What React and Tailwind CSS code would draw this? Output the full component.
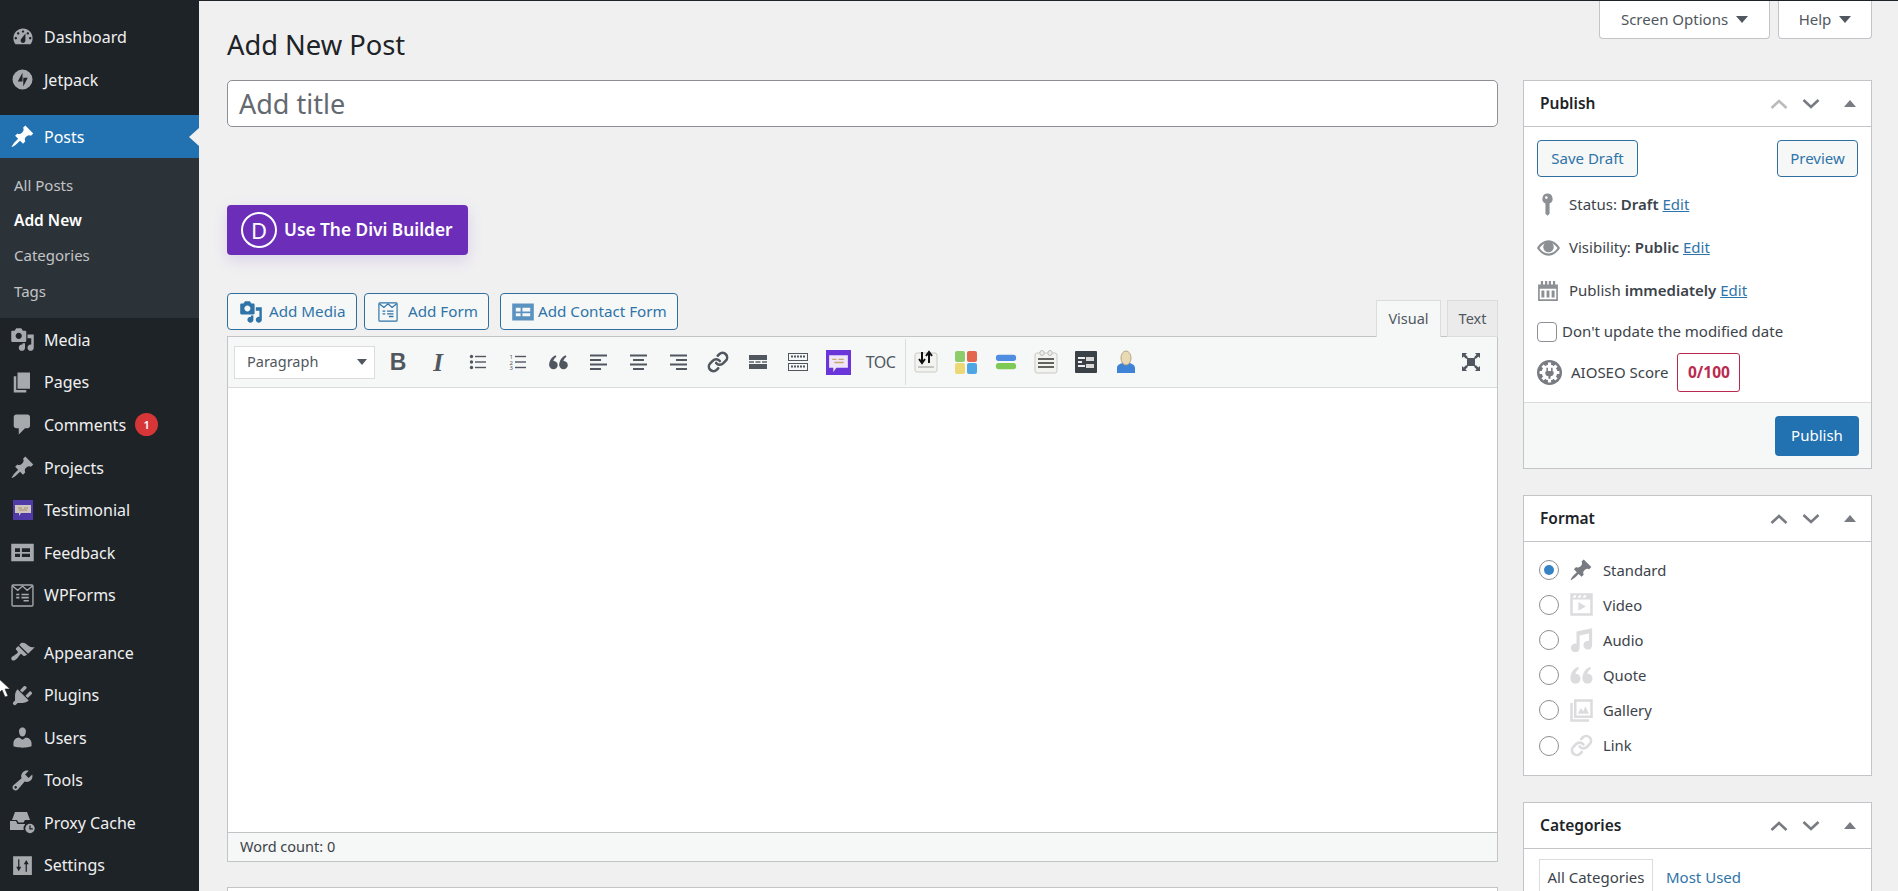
import React from "react";
import { Link as LinkIcon } from "lucide-react";

const paths = {
  dashboard: "M3.76 16h12.48c1.1-1.37 1.76-3.11 1.76-5 0-4.42-3.58-8-8-8s-8 3.58-8 8c0 1.89.66 3.63 1.76 5zM10 4.5c.55 0 1 .45 1 1s-.45 1-1 1-1-.45-1-1 .45-1 1-1zM6 6c.55 0 1 .45 1 1s-.45 1-1 1-1-.45-1-1 .45-1 1-1zm8 0c.55 0 1 .45 1 1s-.45 1-1 1-1-.45-1-1 .45-1 1-1zm-5.37 5.55L12 7v6c0 1.1-.9 2-2 2s-2-.9-2-2c0-.57.24-1.08.63-1.45zM4 10c.55 0 1 .45 1 1s-.45 1-1 1-1-.45-1-1 .45-1 1-1zm12 0c.55 0 1 .45 1 1s-.45 1-1 1-1-.45-1-1 .45-1 1-1z",
  jetpack: "M10 2a8 8 0 1 0 0 16 8 8 0 0 0 0-16zM10 4.5v7H6.2zM10.6 15.5v-7h3.6z",
  post: "M10.44 3.02l1.82-1.82 6.36 6.35-1.83 1.82c-1.05-.68-2.48-.57-3.41.36l-.75.75c-.92.93-1.04 2.35-.35 3.41l-1.83 1.82-2.41-2.41-2.8 2.79c-.42.42-3.38 2.71-3.8 2.29s1.86-3.39 2.28-3.81l2.79-2.79L4.1 9.36l1.83-1.82c1.05.69 2.48.57 3.4-.36l.75-.75c.93-.92 1.05-2.35.36-3.41z",
  media: "M13 11V4c0-.55-.45-1-1-1h-1.67L9 1H5L3.67 3H2c-.55 0-1 .45-1 1v7c0 .55.45 1 1 1h10c.55 0 1-.45 1-1zM7 4.5c1.38 0 2.5 1.12 2.5 2.5S8.38 9.5 7 9.5 4.5 8.38 4.5 7 5.62 4.5 7 4.5zM14 6h5v10.5c0 1.38-1.12 2.5-2.5 2.5S14 17.88 14 16.5s1.12-2.5 2.5-2.5c.17 0 .34.02.5.05V9h-3V6zm-4 8.05V13h2v3.5c0 1.38-1.12 2.5-2.5 2.5S7 17.88 7 16.5 8.12 14 9.5 14c.17 0 .34.02.5.05z",
  page: "M6 15V2h10v13H6zm-1 1h8v2H3V5h2v11z",
  comment: "M5 2h9c1.1 0 2 .9 2 2v7c0 1.1-.9 2-2 2h-2l-5 5v-5H5c-1.1 0-2-.9-2-2V4c0-1.1.9-2 2-2z",
  feedback: "M1 3h18v14H1zM4 6.500v3h4v-3zM9.500 6.500v3H16v-3zM4 11v2.500h4V11zM9.500 11v2.500H16V11z",
  appearance: "M14.48 11.06L7.41 3.99l1.5-1.5c.5-.56 2.3-.47 3.51.32 1.21.8 1.43 1.28 2.91 2.1 1.18.64 2.45 1.26 4.45.85zm-.71.71L6.7 4.7 4.93 6.47c-.39.39-.39 1.02 0 1.41l1.06 1.06c.39.39.39 1.03 0 1.42-.6.6-1.43 1.11-2.21 1.69-.35.26-.7.53-1.01.84C1.43 13.23.4 14.85 1.53 15.98c1.13 1.13 2.75.1 4.08-1.24.31-.31.58-.66.85-1.01.58-.78 1.09-1.61 1.69-2.21.39-.39 1.02-.39 1.41 0l1.06 1.06c.39.39 1.02.39 1.41 0z",
  plugins: "M13.11 4.36L9.87 7.6 8 5.73l3.24-3.24c.35-.34 1.05-.2 1.56.32.52.51.66 1.21.31 1.55zm-8 1.77l.91-1.12 9.01 9.01-1.19.84c-.71.71-2.63 1.16-3.82 1.16H6.14L4.9 17.26c-.59.59-1.54.59-2.12 0-.59-.58-.59-1.53 0-2.12l1.24-1.24v-3.88c0-1.13.4-3.19 1.09-3.89zm7.26 3.97l3.24-3.24c.34-.35 1.04-.21 1.55.31.52.51.66 1.21.31 1.55l-3.24 3.25z",
  users: "M10 9.25c-2.27 0-2.73-3.44-2.73-3.44C7 4.02 7.82 2 9.97 2c2.16 0 2.98 2.02 2.71 3.81 0 0-.41 3.44-2.68 3.44zm0 2.57L12.72 10c2.39 0 4.52 2.33 4.52 4.53v2.49s-3.65 1.13-7.24 1.13c-3.65 0-7.24-1.13-7.24-1.13v-2.49c0-2.25 1.94-4.48 4.47-4.48z",
  tools: "M16.68 9.77c-1.34 1.34-3.3 1.67-4.95.99l-5.41 6.52c-.99.99-2.59.99-3.58 0s-.99-2.59 0-3.57l6.52-5.42c-.68-1.65-.35-3.61.99-4.95 1.28-1.28 3.12-1.62 4.72-1.06l-2.89 2.89 2.82 2.82 2.86-2.87c.53 1.58.18 3.39-1.08 4.65zM3.81 16.21c.4.39 1.04.39 1.43 0 .4-.4.4-1.04 0-1.43-.39-.4-1.03-.4-1.43 0-.39.39-.39 1.03 0 1.43z",
  settings: "M2.5 2.5h15v15h-15zM6.5 5v6H5l2 3.5L9 11H7.500V5zM12.500 15V9H11l2-3.5L15 9h-1.500v6z",
  pin: "M10 .5a4.500 4.500 0 0 1 1.800 8.600V18L10 19.800 8.200 18V9.100A4.500 4.500 0 0 1 10 .5zM9 2.800a1.200 1.200 0 1 0 0 2.400 1.200 1.200 0 0 0 0-2.400z",
  calendar: "M1 4h2.500V1h2v3h1.800V1h2v3h1.400V1h2v3h1.800V1h2v3H19v15H1zM2.500 8v9.500h15V8zM4 9.500h2.700V16H4zM8.700 9.500h2.600V16H8.700zM13.300 9.500H16V16h-2.700z",
  video: "M1 1h18v18H1zM3 6v11h14V6zM7.500 8l6 3.500-6 3.500zM4 2.500L3 4.500h2l1-2zM8 2.500L7 4.500h2l1-2zM12 2.500L11 4.500h2l1-2z",
  audio: "M6 3.500L18.500 1v13.500a3.500 3.500 0 1 1-2.500-3.300V5.200L8.500 6.700v10a3.500 3.500 0 1 1-2.500-3.300z",
  gallery: "M1 4h2v13h13v2H1zM4 1h15v15H4zM6 3v11h11V3zM7 12.500l2.500-4.500 2 2.500L13 6.500l3 6z",
};

function Dash({ name, className }) {
  return (
    <svg viewBox="0 0 20 20" className={className} fill="currentColor" fillRule="evenodd">
      <path d={paths[name]} />
    </svg>
  );
}

function QuoteMark({ className }) {
  return (
    <svg viewBox="0 0 20 20" className={className} fill="currentColor">
      <circle cx="5.200" cy="12.500" r="4" />
      <path d="M1.200 12.500c0-4.500 2-7.500 6-9.500l.8 1.500C5.800 6 4.800 8 5 10z" />
      <circle cx="14.800" cy="12.500" r="4" />
      <path d="M10.800 12.500c0-4.500 2-7.500 6-9.500l.8 1.500C15.400 6 14.400 8 14.600 10z" />
    </svg>
  );
}

function Testimonial({ className }) {
  return (
    <svg viewBox="0 0 20 20" className={className}>
      <rect width="20" height="20" fill="#4f3aa8" />
      <path d="M2 5h16v8H8l-2 3v-3H2z" fill="#cfc7bd" />
      <path d="M5 8h4M11 8h4M6 10h8" stroke="#a88f6a" strokeWidth="1" />
    </svg>
  );
}

function ProxyCache({ className }) {
  return (
    <svg viewBox="0 0 25 22" className={className} fill="currentColor">
      <path d="M5 0h12l3 8h-5l-1.500 2.500h-5L7 8H2z" />
      <path d="M0 9h6l1.500 3h7.700a6.500 6.500 0 0 0-1.500 6H0z" />
      <circle cx="20" cy="16.500" r="4.700" />
      <path d="M20 13.500v3.300h2.800" stroke="#1d2327" strokeWidth="1.300" fill="none" />
    </svg>
  );
}

function WpForm({ className, color = "currentColor" }) {
  return (
    <svg viewBox="0 0 22 22" className={className} fill="none" stroke={color} strokeWidth="1.300">
      <rect x="1" y="1" width="20" height="20" rx="1" />
      <path d="M1.500 2l5 4 4.500-4 4.500 4 5-4" />
      <path d="M5 10h3M10 10h7M5 13h3M10 13h7M12 16h5" strokeWidth="1.500" />
    </svg>
  );
}

const topItems = [
  { label: "Dashboard", icon: <Dash name="dashboard" className="w-[24px] h-[24px]" /> },
  { label: "Jetpack", icon: <Dash name="jetpack" className="w-[25px] h-[25px]" /> },
];
const midItems = [
  { label: "Media", icon: <Dash name="media" className="w-[25px] h-[25px]" /> },
  { label: "Pages", icon: <Dash name="page" className="w-[25px] h-[25px]" /> },
  { label: "Comments", badge: "1", icon: <Dash name="comment" className="w-[25px] h-[25px]" /> },
  { label: "Projects", icon: <Dash name="post" className="w-[25px] h-[25px]" /> },
  { label: "Testimonial", icon: <Testimonial className="w-[20px] h-[20px]" /> },
  { label: "Feedback", icon: <Dash name="feedback" className="w-[25px] h-[25px]" /> },
  { label: "WPForms", icon: <WpForm className="w-[23px] h-[23px]" /> },
];
const lowItems = [
  { label: "Appearance", icon: <Dash name="appearance" className="w-[25px] h-[25px]" /> },
  { label: "Plugins", icon: <Dash name="plugins" className="w-[25px] h-[25px]" /> },
  { label: "Users", icon: <Dash name="users" className="w-[25px] h-[25px]" /> },
  { label: "Tools", icon: <Dash name="tools" className="w-[25px] h-[25px]" /> },
  { label: "Proxy Cache", icon: <ProxyCache className="w-[25px] h-[22px]" /> },
  { label: "Settings", icon: <Dash name="settings" className="w-[25px] h-[25px]" /> },
];

function MenuItem({ item }) {
  return (
    <div className="flex items-center h-[42.55px] text-[#f0f0f1] text-[16px]">
      <div className="w-[44px] flex justify-center pl-[1px] text-[#a7aaad]">{item.icon}</div>
      <span>{item.label}</span>
      {item.badge && (
        <span className="ml-[9px] w-[23px] h-[23px] rounded-full bg-[#d63638] text-white text-[11px] font-semibold flex items-center justify-center">
          {item.badge}
        </span>
      )}
    </div>
  );
}

function Sidebar() {
  return (
    <div className="w-[199px] shrink-0 bg-[#1d2327] pt-[15px]">
      {topItems.map((i) => <MenuItem key={i.label} item={i} />)}
      <div className="relative flex items-center h-[43px] mt-[14px] bg-[#2271b1] text-white text-[16px]">
        <div className="w-[44px] flex justify-center pl-[1px]"><Dash name="post" className="w-[25px] h-[25px]" /></div>
        <span>Posts</span>
        <div className="absolute right-0 top-[13px] w-0 h-0 border-y-[9px] border-y-transparent border-r-[10px] border-r-[#f0f0f1]" />
      </div>
      <div className="bg-[#2c3338] h-[160px] pt-[9px] pl-[14px] text-[15px] text-[#c3c4c7] flex flex-col">
        <div className="h-[35.4px] flex items-center">All Posts</div>
        <div className="h-[35.4px] flex items-center font-semibold text-white text-[15.5px]">Add New</div>
        <div className="h-[35.4px] flex items-center">Categories</div>
        <div className="h-[35.4px] flex items-center">Tags</div>
      </div>
      <div className="h-[0.5px]" />
      {midItems.map((i) => <MenuItem key={i.label} item={i} />)}
      <div className="h-[15px]" />
      {lowItems.map((i) => <MenuItem key={i.label} item={i} />)}
    </div>
  );
}

function Tool({ children }) {
  return <div className="w-[40px] h-[32px] flex items-center justify-center text-[#50575e]">{children}</div>;
}

function Lines({ kind }) {
  const rows = {
    left: [[0, 17], [0, 11], [0, 17], [0, 11]],
    center: [[0, 17], [3, 11], [0, 17], [3, 11]],
    right: [[0, 17], [6, 11], [0, 17], [6, 11]],
  }[kind];
  return (
    <svg viewBox="0 0 19 18" className="w-[19px] h-[18px]" fill="currentColor">
      {rows.map((r, i) => <rect key={i} x={r[0] + 1} y={1.500 + i * 4.500} width={r[1]} height="2" />)}
    </svg>
  );
}

function Toolbar() {
  return (
    <div className="h-[51px] bg-[#f6f7f7] border-b border-[#dcdcde] flex items-center pl-[6px] pr-[7px]">
      <div className="w-[141px] h-[33px] bg-white border border-[#dcdcde] flex items-center justify-between pl-[12px] pr-[7px] text-[14.5px] text-[#50575e]">
        <span>Paragraph</span>
        <span className="w-0 h-0 border-x-[5px] border-x-transparent border-t-[6px] border-t-[#50575e]" />
      </div>
      <div className="flex items-center ml-[3px]">
        <Tool><span className="font-['Liberation_Sans',sans-serif] font-bold text-[23px] leading-none">B</span></Tool>
        <Tool><span className="font-['Liberation_Serif',serif] font-bold italic text-[25px] leading-none">I</span></Tool>
        <Tool>
          <svg viewBox="0 0 18 18" className="w-[18px] h-[18px]" fill="currentColor">
            <circle cx="2.500" cy="3.500" r="1.700" /><circle cx="2.500" cy="9" r="1.700" /><circle cx="2.500" cy="14.500" r="1.700" />
            <rect x="6" y="2.800" width="11" height="1.400" /><rect x="6" y="8.300" width="11" height="1.400" /><rect x="6" y="13.800" width="11" height="1.400" />
          </svg>
        </Tool>
        <Tool>
          <svg viewBox="0 0 18 18" className="w-[18px] h-[18px]" fill="currentColor">
            <text x="0.500" y="6" fontSize="6">1</text><text x="0.500" y="11.500" fontSize="6">2</text><text x="0.500" y="17" fontSize="6">3</text>
            <rect x="6" y="2.800" width="11" height="1.400" /><rect x="6" y="8.300" width="11" height="1.400" /><rect x="6" y="13.800" width="11" height="1.400" />
          </svg>
        </Tool>
        <Tool><QuoteMark className="w-[21px] h-[21px]" /></Tool>
        <Tool><Lines kind="left" /></Tool>
        <Tool><Lines kind="center" /></Tool>
        <Tool><Lines kind="right" /></Tool>
        <Tool><LinkIcon className="w-[22px] h-[22px]" strokeWidth={2.800} /></Tool>
        <Tool>
          <svg viewBox="0 0 18 18" className="w-[18px] h-[18px]" fill="currentColor">
            <rect y="2" width="18" height="5" /><rect y="8.300" width="5" height="1.400" /><rect x="6.500" y="8.300" width="5" height="1.400" /><rect x="13" y="8.300" width="5" height="1.400" /><rect y="11" width="18" height="5" />
          </svg>
        </Tool>
        <Tool>
          <svg viewBox="0 0 20 20" className="w-[20px] h-[20px]" fill="none" stroke="currentColor">
            <rect x="0.500" y="1.500" width="19" height="7" /><rect x="0.500" y="11.500" width="19" height="7" />
            <path d="M3 4.500h14M3 14.500h14" strokeWidth="2" strokeDasharray="2 1" />
          </svg>
        </Tool>
        <Tool>
          <svg viewBox="0 0 24 24" className="w-[25px] h-[25px]">
            <rect width="24" height="24" fill="#6a35d9" />
            <path d="M3 5h18v12H10l-3 4v-4H3z" fill="#efe6fa" />
            <path d="M6 9h4M12 9h5M8 12h9" stroke="#c9a86a" strokeWidth="1.300" />
          </svg>
        </Tool>
        <div className="w-[45px] text-center text-[16px] text-[#50575e] tracking-[-0.5px]">TOC</div>
      </div>
      <div className="w-[1px] h-[46px] bg-[#dcdcde] ml-[2px]" />
      <div className="flex items-center">
        <Tool>
          <svg viewBox="0 0 24 24" className="w-[24px] h-[24px]">
            <rect x="1" y="3" width="22" height="19" rx="2" fill="#f3f3f0" stroke="#c9c9c4" />
            <path d="M8 2v10M5 9l3 4 3-4M15 13V3M12 6l3-4 3 4" stroke="#111" strokeWidth="2" fill="none" />
            <path d="M4 17h16" stroke="#b5b5b0" strokeWidth="1.500" />
          </svg>
        </Tool>
        <Tool>
          <svg viewBox="0 0 24 24" className="w-[24px] h-[24px]">
            <rect x="1" y="1" width="10" height="11" rx="2" fill="#8ecb6b" /><rect x="13" y="1" width="10" height="11" rx="2" fill="#e3674f" />
            <rect x="1" y="13" width="10" height="11" rx="2" fill="#ecd874" /><rect x="13" y="13" width="10" height="11" rx="2" fill="#4fa6e4" />
          </svg>
        </Tool>
        <Tool>
          <svg viewBox="0 0 24 24" className="w-[22px] h-[22px]">
            <rect x="1" y="4" width="22" height="7" rx="3" fill="#4f8de0" /><rect x="1" y="13" width="22" height="7" rx="3" fill="#7fc957" />
          </svg>
        </Tool>
        <Tool>
          <svg viewBox="0 0 24 24" className="w-[24px] h-[24px]">
            <rect x="1" y="3" width="22" height="20" rx="2" fill="#f2f2ee" stroke="#c9c9c4" />
            <rect x="6" y="0.500" width="4" height="5" rx="2" fill="#eee" stroke="#bbb" /><rect x="14" y="0.500" width="4" height="5" rx="2" fill="#eee" stroke="#bbb" />
            <path d="M4 9h16M4 13h16M4 17h16" stroke="#333" strokeWidth="1.700" />
          </svg>
        </Tool>
        <Tool>
          <svg viewBox="0 0 24 24" className="w-[24px] h-[24px]">
            <rect x="1" y="1" width="22" height="22" rx="1" fill="#3a4147" />
            <rect x="4" y="7" width="7" height="2" fill="#eee" /><rect x="4" y="11" width="4" height="2" fill="#eee" /><rect x="4" y="15" width="7" height="2" fill="#eee" />
            <rect x="12" y="7" width="8" height="4" fill="#d8d8d8" /><rect x="12" y="14" width="8" height="4" fill="#d8d8d8" />
          </svg>
        </Tool>
        <Tool>
          <svg viewBox="0 0 24 24" className="w-[24px] h-[24px]">
            <path d="M3 23v-5c0-3 3-4 5-5h8c2 1 5 2 5 5v5z" fill="#3f83d6" />
            <ellipse cx="12" cy="8" rx="5" ry="7" fill="#e9d9b5" stroke="#b8a67f" />
          </svg>
        </Tool>
      </div>
      <div className="ml-auto w-[20px] h-[20px] mr-[9px] text-[#50575e]">
        <svg viewBox="0 0 20 20" className="w-[20px] h-[20px]" fill="currentColor">
          <rect x="6" y="6" width="8" height="8" />
          <path d="M1 1h5L4.500 2.700 7 5.200 5.200 7 2.700 4.500 1 6zM19 1v5l-1.700-1.500L14.800 7 13 5.200l2.500-2.500L14 1zM1 19v-5l1.700 1.500L5.200 13 7 14.800l-2.500 2.500L6 19zM19 19h-5l1.500-1.700L13 14.800 14.800 13l2.500 2.500L19 14z" />
        </svg>
      </div>
    </div>
  );
}

function Editor() {
  return (
    <div className="w-[1271px] shrink-0">
      <div className="h-[47px] bg-white border border-[#8c8f94] rounded-[5px] flex items-center pl-[11px] pt-[2px] text-[27px] text-[#646970]">Add title</div>
      <div className="mt-[78px] w-[241px] h-[50px] bg-[#6c2eb9] rounded-[4px] shadow-[0_5px_15px_rgba(108,46,185,0.15)] flex items-center pl-[14px] gap-[7px] text-white font-semibold text-[17.300px]">
        <span className="w-[36px] h-[36px] border-2 border-white rounded-full flex items-center justify-center text-[22px] font-normal">D</span>
        <span>Use The Divi Builder</span>
      </div>
      <div className="mt-[38px] h-[43px] flex justify-between">
        <div className="flex text-[15.200px] text-[#2f74a8]">
          <div className="w-[130px] h-[37px] bg-[#f6f7f7] border border-[#2f6f9e] rounded-[4px] flex items-center pl-[11px] gap-[6px]">
            <Dash name="media" className="w-[24px] h-[24px]" />
            <span>Add Media</span>
          </div>
          <div className="ml-[7px] w-[125px] h-[37px] bg-[#f6f7f7] border border-[#2f6f9e] rounded-[4px] flex items-center pl-[13px] gap-[10px]">
            <WpForm className="w-[20px] h-[20px]" />
            <span>Add Form</span>
          </div>
          <div className="ml-[11px] w-[178px] h-[37px] bg-[#f6f7f7] border border-[#2f6f9e] rounded-[4px] flex items-center pl-[10px] gap-[3px]">
            <Dash name="feedback" className="w-[24px] h-[24px] text-[#5b93c0]" />
            <span>Add Contact Form</span>
          </div>
        </div>
        <div className="flex items-end gap-[6px] text-[14.500px] text-[#50575e] relative z-10 -mb-[1px]">
          <div className="w-[65px] h-[37px] bg-[#f6f7f7] border border-[#dcdcde] border-b-0 flex items-center justify-center">Visual</div>
          <div className="w-[51px] h-[37px] bg-[#ebebeb] border border-[#dcdcde] flex items-center justify-center">Text</div>
        </div>
      </div>
      <div className="h-[526px] border border-[#c3c4c7] bg-white flex flex-col">
        <Toolbar />
        <div className="flex-1" />
        <div className="h-[29px] bg-[#f6f7f7] border-t border-[#c3c4c7] flex items-center pl-[12px] text-[14.500px] text-[#3c434a]">Word count: 0</div>
      </div>
      <div className="mt-[25px] h-[40px] bg-white border border-[#c3c4c7]" />
    </div>
  );
}

function BoxHeader({ title, upDisabled }) {
  return (
    <div className="h-[46px] border-b border-[#c3c4c7] flex items-center pl-[16px] pr-[15px]">
      <span className="font-semibold text-[15.500px] text-[#1d2327] pt-[1px]">{title}</span>
      <svg viewBox="0 0 18 12" className={`ml-auto w-[18px] h-[12px] ${upDisabled ? "text-[#b9bbbd]" : "text-[#787c82]"}`} fill="none" stroke="currentColor" strokeWidth="2.600">
        <path d="M1.500 10L9 3l7.500 7" />
      </svg>
      <svg viewBox="0 0 18 12" className="ml-[14px] w-[18px] h-[12px] text-[#787c82]" fill="none" stroke="currentColor" strokeWidth="2.600">
        <path d="M1.500 2L9 9l7.500-7" />
      </svg>
      <div className="ml-[24px] w-0 h-0 border-x-[6px] border-x-transparent border-b-[7px] border-b-[#787c82]" />
    </div>
  );
}

function MiscRow({ icon, children, h = "h-[43px]" }) {
  return (
    <div className={`${h} flex items-center text-[15px] text-[#3c434a]`}>
      <div className="w-[32px] shrink-0 text-[#8c8f94]">{icon}</div>
      <div>{children}</div>
    </div>
  );
}

function EditLink() {
  return <span className="text-[#2f74a8] underline ml-[4px]">Edit</span>;
}

function EyeIcon() {
  return (
    <svg viewBox="0 0 24 16" className="w-[23px] h-[16px]" fill="currentColor" fillRule="evenodd">
      <path d="M12 0c5.500 0 9.500 4 12 8-2.500 4-6.500 8-12 8S2.500 12 0 8c2.500-4 6.500-8 12-8zM12 2.200C8 2.200 4.800 4.800 2.600 8c2.200 3.200 5.400 5.800 9.400 5.800s7.200-2.600 9.400-5.800C19.200 4.800 16 2.200 12 2.200z" />
      <circle cx="12" cy="7" r="5.500" />
    </svg>
  );
}

const formats = [
  { label: "Standard", checked: true, icon: <Dash name="post" className="w-[24px] h-[24px] text-[#787c82]" /> },
  { label: "Video", icon: <Dash name="video" className="w-[25px] h-[25px] text-[#dcdcde]" /> },
  { label: "Audio", icon: <Dash name="audio" className="w-[25px] h-[25px] text-[#dcdcde]" /> },
  { label: "Quote", icon: <QuoteMark className="w-[25px] h-[25px] text-[#dcdcde]" /> },
  { label: "Gallery", icon: <Dash name="gallery" className="w-[25px] h-[25px] text-[#dcdcde]" /> },
  { label: "Link", icon: <LinkIcon className="w-[23px] h-[23px] text-[#dcdcde]" strokeWidth={2.800} /> },
];

function SideColumn() {
  return (
    <div className="w-[349px] shrink-0">
      <div className="h-[389px] bg-white border border-[#c3c4c7] flex flex-col">
        <BoxHeader title="Publish" upDisabled />
        <div className="flex justify-between px-[13px] pt-[13px] text-[15px] text-[#2f74a8]">
          <div className="w-[101px] h-[37px] bg-[#f6f7f7] border border-[#2f6f9e] rounded-[4px] flex items-center justify-center">Save Draft</div>
          <div className="w-[81px] h-[37px] bg-[#f6f7f7] border border-[#2f6f9e] rounded-[4px] flex items-center justify-center">Preview</div>
        </div>
        <div className="px-[13px] pt-[6px]">
          <MiscRow icon={<Dash name="pin" className="w-[23px] h-[23px] -ml-[1px]" />}>Status: <b className="font-semibold">Draft</b><EditLink /></MiscRow>
          <MiscRow icon={<EyeIcon />}>Visibility: <b className="font-semibold">Public</b><EditLink /></MiscRow>
          <MiscRow icon={<Dash name="calendar" className="w-[22px] h-[22px]" />}>Publish <b className="font-semibold">immediately</b><EditLink /></MiscRow>
          <div className="h-[41px] flex items-center text-[15px] text-[#3c434a] -mt-[1px]">
            <span className="w-[20px] h-[20px] bg-white border border-[#8c8f94] rounded-[4px] mr-[5px]" />
            Don't update the modified date
          </div>
          <div className="h-[39px] flex items-center text-[15px] text-[#3c434a] mt-[1px]">
            <svg viewBox="0 0 24 24" className="w-[25px] h-[25px] mr-[9px]">
              <circle cx="12" cy="12" r="12" fill="#787c82" />
              <circle cx="12" cy="12" r="7.500" fill="#fff" />
              <path d="M12 2.500v19M2.500 12h19M5.300 5.300l13.400 13.400M18.700 5.300L5.300 18.700" stroke="#fff" strokeWidth="3" />
              <path d="M9 7.500h1.500v3h3v-3H15v3.500h1V13c0 1.500-1.500 2.500-3 2.700V18h-2v-2.300C9.500 15.500 8 14.500 8 13v-2h1z" fill="#787c82" />
            </svg>
            <span>AIOSEO Score</span>
            <span className="ml-[9px] w-[63px] h-[39px] border border-[#b92a4e] rounded-[3px] flex items-center justify-center font-bold text-[15.500px] text-[#b92a4e]">0/100</span>
          </div>
        </div>
        <div className="mt-auto h-[66px] bg-[#f6f7f7] border-t border-[#dcdcde] flex items-center justify-end pr-[12px]">
          <div className="w-[84px] h-[40px] bg-[#2271b1] rounded-[4px] text-white text-[15px] flex items-center justify-center">Publish</div>
        </div>
      </div>
      <div className="mt-[26px] h-[281px] bg-white border border-[#c3c4c7]">
        <BoxHeader title="Format" />
        <div className="pl-[15px] pt-[10px]">
          {formats.map((f) => (
            <div key={f.label} className="h-[35.200px] flex items-center text-[14.800px] text-[#3c434a]">
              <span className="w-[20px] h-[20px] rounded-full border border-[#8c8f94] bg-white flex items-center justify-center">
                {f.checked && <span className="w-[10px] h-[10px] rounded-full bg-[#3582c4]" />}
              </span>
              <span className="w-[44px] flex justify-center">{f.icon}</span>
              <span>{f.label}</span>
            </div>
          ))}
        </div>
      </div>
      <div className="mt-[26px] h-[100px] bg-white border border-[#c3c4c7]">
        <BoxHeader title="Categories" />
        <div className="pl-[15px] pt-[10px] flex text-[15px]">
          <div className="w-[114px] h-[40px] pb-[5px] border border-[#dcdcde] border-b-0 flex items-center justify-center text-[#3c434a]">All Categories</div>
          <div className="ml-[13px] h-[36px] flex items-center text-[#2f74a8]">Most Used</div>
        </div>
      </div>
    </div>
  );
}

export default function App() {
  return (
    <div className="relative h-[891px] w-[1898px] overflow-hidden flex border-t border-[#1d2327] bg-[#f0f0f1] font-['Noto_Sans',sans-serif]">
      <Sidebar />
      <div className="flex-1 pl-[28px] pr-[26px]">
        <div className="h-[79px] flex justify-between items-start">
          <h1 className="mt-[24px] text-[27.300px] leading-[40px] text-[#1d2327]">Add New Post</h1>
          <div className="flex gap-[8px] text-[15px] text-[#50575e]">
            <div className="w-[171px] h-[38px] bg-white border border-t-0 border-[#c3c4c7] rounded-b-[4px] flex items-center justify-center gap-[8px]">
              <span>Screen Options</span>
              <span className="w-0 h-0 border-x-[6px] border-x-transparent border-t-[7px] border-t-[#50575e]" />
            </div>
            <div className="w-[94px] h-[38px] bg-white border border-t-0 border-[#c3c4c7] rounded-b-[4px] flex items-center justify-center gap-[8px]">
              <span>Help</span>
              <span className="w-0 h-0 border-x-[6px] border-x-transparent border-t-[7px] border-t-[#50575e]" />
            </div>
          </div>
        </div>
        <div className="flex gap-[25px]">
          <Editor />
          <SideColumn />
        </div>
      </div>
      <svg viewBox="0 0 14 22" className="absolute left-[-3px] top-[676px] w-[14px] h-[22px]">
        <path d="M1 1v16l4-4 3 7 3-1-3-7h5z" fill="#fff" stroke="#222" strokeWidth="0.600" />
      </svg>
    </div>
  );
}
